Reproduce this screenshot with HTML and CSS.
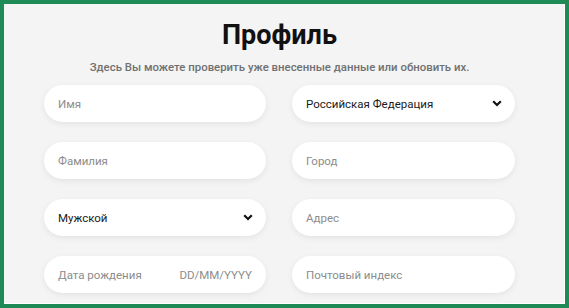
FILE: index.html
```html
<!DOCTYPE html>
<html lang="ru">
<head>
    <meta charset="UTF-8">
    <meta name="viewport" content="width=device-width, initial-scale=1.0">
    <title>Профиль</title>
    <link rel="stylesheet" href="styles.css">
</head>
<body>

    <div class="frame">
        <h1>Профиль</h1>
        <p class="lead">Здесь Вы можете проверить уже внесенные данные или обновить их.</p>

        <form class="profile-form">
            <div class="field"><span class="placeholder">Имя</span></div>
            <div class="field select">
                <span class="value">Российская Федерация</span>
                <svg class="chevron" width="10" height="7" viewBox="0 0 10 7"><path d="M1.2 1.2 L5 5 L8.8 1.2" fill="none" stroke="#111" stroke-width="2.2"/></svg>
            </div>

            <div class="field"><span class="placeholder">Фамилия</span></div>
            <div class="field"><span class="placeholder">Город</span></div>

            <div class="field select">
                <span class="value">Мужской</span>
                <svg class="chevron" width="10" height="7" viewBox="0 0 10 7"><path d="M1.2 1.2 L5 5 L8.8 1.2" fill="none" stroke="#111" stroke-width="2.2"/></svg>
            </div>
            <div class="field"><span class="placeholder">Адрес</span></div>

            <div class="field">
                <span class="placeholder">Дата рождения</span>
                <span class="placeholder">DD/MM/YYYY</span>
            </div>
            <div class="field"><span class="placeholder">Почтовый индекс</span></div>
        </form>
    </div>

</body>
</html>
```

FILE: styles.css
```css
body {
    margin: 0;
    font-family: Roboto, "Noto Sans", sans-serif;
}
.frame {
    box-sizing: border-box;
    width: 569px;
    height: 308px;
    border: 4px solid #1e8a55;
    background-color: #f4f4f4;
    box-shadow: inset -1px -1px 0 #ffffff;
    padding: 14px 50px 0 40px;
    overflow: hidden;
}
h1 {
    margin: 0;
    font-size: 27px;
    line-height: 34px;
    font-weight: 700;
    text-align: center;
    color: #111;
}
.lead {
    margin: 7px 0 0;
    font-size: 11.4px;
    line-height: 16px;
    font-weight: 500;
    text-align: center;
    color: #707070;
}
.profile-form {
    display: grid;
    grid-template-columns: 222px 223px;
    column-gap: 26px;
    row-gap: 20px;
    margin-top: 10px;
}
.field {
    height: 37px;
    background-color: #fff;
    border-radius: 19px;
    box-shadow: 0 2px 6px rgba(0, 0, 0, 0.07);
    display: flex;
    align-items: center;
    justify-content: space-between;
    padding: 0 14px;
    font-size: 11.5px;
}
.placeholder {
    color: #8c8c8c;
}
.value {
    color: #1a1a1a;
}
.select {
    padding-right: 13px;
}
```
